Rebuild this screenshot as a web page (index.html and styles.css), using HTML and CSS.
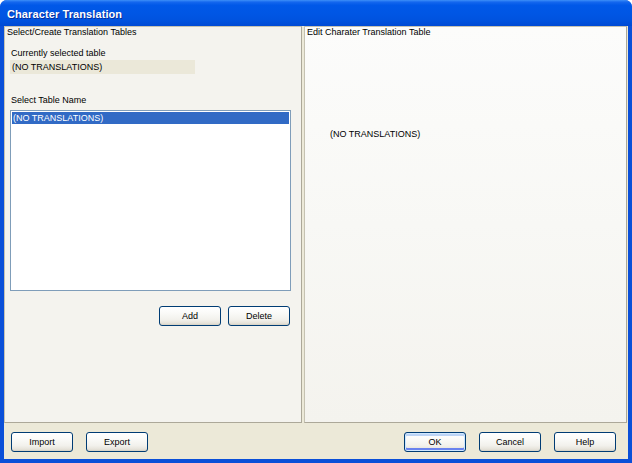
FILE: index.html
```html
<!DOCTYPE html>
<html>
<head>
<meta charset="utf-8">
<link rel="stylesheet" href="styles.css">
</head>
<body>
<div class="window">
  <div class="titlebar"><span class="title">Character Translation</span></div>
  <div class="client">
    <div class="panels">
      <div class="panel panel-left">
        <div class="panel-caption">Select/Create Translation Tables</div>
        <div class="label label-current">Currently selected table</div>
        <div class="field">(NO TRANSLATIONS)</div>
        <div class="label label-select">Select Table Name</div>
        <div class="listbox">
          <div class="list-item selected">(NO TRANSLATIONS)</div>
        </div>
        <div class="panel-buttons">
          <button class="btn">Add</button>
          <button class="btn">Delete</button>
        </div>
      </div>
      <div class="panel panel-right">
        <div class="panel-caption">Edit Charater Translation Table</div>
        <div class="placeholder">(NO TRANSLATIONS)</div>
      </div>
    </div>
    <div class="bottombar">
      <div class="btn-group">
        <button class="btn">Import</button>
        <button class="btn">Export</button>
      </div>
      <div class="btn-group">
        <button class="btn btn-default">OK</button>
        <button class="btn">Cancel</button>
        <button class="btn">Help</button>
      </div>
    </div>
  </div>
</div>
</body>
</html>
```

FILE: styles.css
```css
html, body {
  margin: 0;
  padding: 0;
  background: #ffffff;
}

body {
  font-family: "Liberation Sans", Arial, sans-serif;
  font-size: 9px;
  color: #000000;
}

.window {
  width: 632px;
  height: 463px;
  display: flex;
  flex-direction: column;
  background: #0a4fd8;
  border-radius: 7px 7px 0 0;
  overflow: hidden;
  box-sizing: border-box;
}

.titlebar {
  height: 26px;
  flex: none;
  display: flex;
  align-items: center;
  padding: 2px 0 0 7px;
  box-sizing: border-box;
  background: linear-gradient(to bottom,
    #3d8ff8 0%,
    #1467ee 8%,
    #0058e8 20%,
    #0056e4 55%,
    #0052de 80%,
    #004ad4 100%);
}

.title {
  color: #ffffff;
  font-weight: bold;
  font-size: 11px;
  letter-spacing: 0.1px;
  text-shadow: 1px 1px 0 #0a2f9a;
}

.client {
  flex: 1;
  margin: 0 4px 4px 4px;
  background: #ece9d8;
  display: flex;
  flex-direction: column;
  padding-right: 1px;
}

.panels {
  height: 397px;
  display: flex;
  gap: 2px;
  flex: none;
}

.panel {
  box-sizing: border-box;
  border: 1px solid #aca899;
  border-top-color: #c5c2b2;
  border-left-color: #c5c2b2;
  display: flex;
  flex-direction: column;
}

.panel-left {
  width: 298px;
  background: #f4f3ee;
}

.panel-right {
  width: 323px;
  background: linear-gradient(to bottom, #fcfcfb 0%, #f8f8f5 50%, #f4f3ee 100%);
}

.panel-caption {
  line-height: 11px;
  padding-left: 2px;
}

.label {
  line-height: 11px;
  padding-left: 6px;
}

.label-current {
  margin-top: 10px;
}

.field {
  margin: 1px 0 0 5px;
  width: 185px;
  height: 14px;
  line-height: 14px;
  background: #ebe8d9;
  padding-left: 2px;
  box-sizing: border-box;
}

.label-select {
  margin-top: 21px;
}

.listbox {
  margin: 4px 0 0 5px;
  width: 281px;
  height: 181px;
  box-sizing: border-box;
  border: 1px solid #7f9db9;
  background: #ffffff;
  padding: 1px;
}

.list-item {
  height: 12px;
  line-height: 12px;
  padding-left: 1px;
}

.list-item.selected {
  background: #316ac5;
  color: #ffffff;
}

.panel-buttons {
  display: flex;
  justify-content: flex-end;
  gap: 7px;
  margin: 15px 11px 0 0;
}

.placeholder {
  margin: 91px 0 0 25px;
  line-height: 11px;
}

.bottombar {
  flex: 1;
  display: flex;
  justify-content: space-between;
  align-items: flex-start;
  padding: 9px 11px 0 7px;
}

.btn-group {
  display: flex;
  gap: 13px;
}

.btn {
  width: 62px;
  height: 20px;
  box-sizing: border-box;
  margin: 0;
  padding: 0;
  font-family: "Liberation Sans", Arial, sans-serif;
  font-size: 9px;
  color: #000000;
  border: 1px solid #003c74;
  border-radius: 3px;
  background: linear-gradient(to bottom,
    #ffffff 0%,
    #fbfbf9 30%,
    #f2f1ec 70%,
    #e6e3da 90%,
    #d6d0c5 100%);
  box-shadow: inset 0 -1px 0 #d9d5c9;
}

.btn-default {
  box-shadow: inset 0 0 0 1px #cee7ff, inset 0 -2px 0 1px #6982ee, inset 0 2px 0 1px #bcd4f6;
}
```
